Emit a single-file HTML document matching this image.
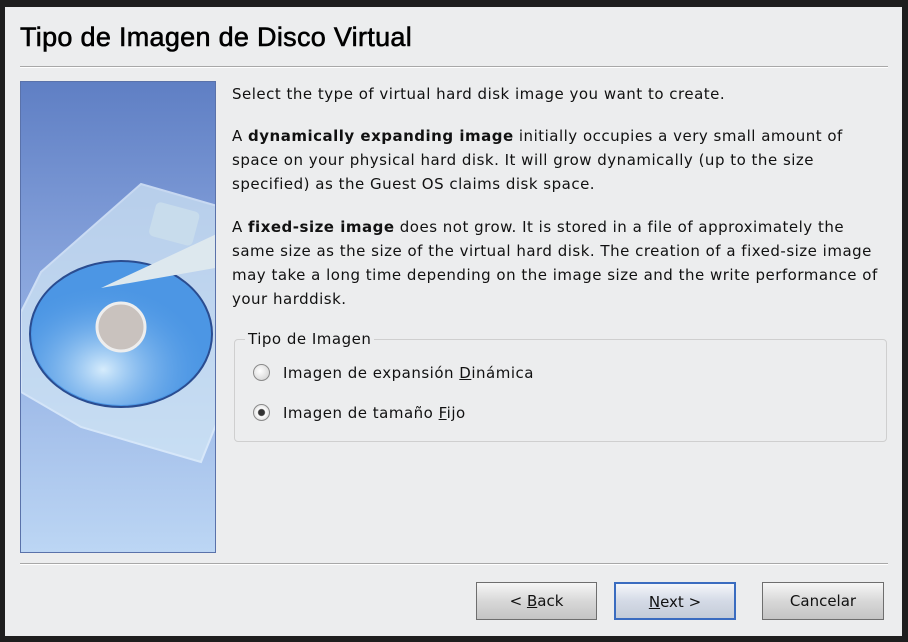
<!DOCTYPE html>
<html><head><style>
*{margin:0;padding:0;box-sizing:border-box}
body{width:908px;height:642px;background:#1e1e1e;position:relative;overflow:hidden;font-family:"DejaVu Sans","Liberation Sans",sans-serif;font-size:15px;letter-spacing:0.5px;color:#111}
.win{position:absolute;left:5px;top:7px;width:897px;height:629px;background:#ecedee}
.title{position:absolute;left:20px;top:22px;font-family:"Liberation Sans",sans-serif;font-size:27px;color:#000;letter-spacing:0.3px;-webkit-text-stroke:0.6px #000}
.hr{position:absolute;height:2px;background:#a8a8a8;border-bottom:1px solid #fff}
.img{position:absolute;left:20px;top:81px;width:196px;height:472px;border:1px solid #5a72aa;background:linear-gradient(#5f7fc4 0%,#7d9ad6 30%,#9ab6e6 60%,#bcd6f4 100%);overflow:hidden}
.txt{position:absolute;left:232px;line-height:24px;white-space:nowrap}
.gb{position:absolute;left:234px;top:339px;width:653px;height:103px;border:1px solid #cfcfcf;border-radius:4px}
.gbl{position:absolute;left:245px;top:329px;background:#ecedee;padding:0 3px;line-height:20px}
.radio{position:absolute;width:17px;height:17px;border-radius:50%;border:1px solid #8a8a8a;background:radial-gradient(circle at 40% 40%,#fff,#ccc)}
.btn{position:absolute;top:582px;height:38px;border:1px solid #6e6e6e;background:linear-gradient(#f6f6f6,#d8d8d8 50%,#c4c4c4);text-align:center;line-height:36px;font-size:15px;letter-spacing:0}
u{text-decoration:underline}
</style></head><body>
<div class="win"></div>
<div class="title">Tipo de Imagen de Disco Virtual</div>
<div class="hr" style="left:20px;top:66px;width:868px"></div>
<div class="img">
<svg width="196" height="472" viewBox="0 0 196 472">
<defs><radialGradient id="g" cx="40%" cy="75%" r="60%"><stop offset="0" stop-color="#d6ecfc"/><stop offset="1" stop-color="#4f9ae6" stop-opacity="0"/></radialGradient></defs>
<path d="M20 190 L120 102 L200 125 L200 330 L180 380 L60 345 L0 310 L0 230 Z" fill="#d4e8f6" opacity="0.7" stroke="#eaf6ff" stroke-width="2"/>
<rect x="130" y="125" width="45" height="35" rx="5" fill="#c8dcec" transform="rotate(15 155 145)"/>
<ellipse cx="100" cy="252" rx="91" ry="73" fill="#4c96e4" stroke="#2a4c90" stroke-width="2"/>
<ellipse cx="100" cy="252" rx="89" ry="71" fill="url(#g)"/>
<circle cx="100" cy="245" r="24" fill="#c9c2be" stroke="#eee" stroke-width="3"/>
<path d="M80 206 L200 150 L200 185 Z" fill="#dde8ee"/>
</svg>
</div>
<div class="txt" style="top:82px">Select the type of virtual hard disk image you want to create.</div>
<div class="txt" style="top:124px">A <b>dynamically expanding image</b> initially occupies a very small amount of<br>space on your physical hard disk. It will grow dynamically (up to the size<br>specified) as the Guest OS claims disk space.</div>
<div class="txt" style="top:215px">A <b>fixed-size image</b> does not grow. It is stored in a file of approximately the<br>same size as the size of the virtual hard disk. The creation of a fixed-size image<br>may take a long time depending on the image size and the write performance of<br>your harddisk.</div>
<div class="gb"></div>
<div class="gbl">Tipo de Imagen</div>
<div class="radio" style="left:253px;top:364px"></div>
<div class="txt" style="left:283px;top:361px">Imagen de expansión <u>D</u>inámica</div>
<div class="radio" style="left:253px;top:404px;background:radial-gradient(circle,#333 0 3px,#fff 4px,#ccc)"></div>
<div class="txt" style="left:283px;top:401px">Imagen de tamaño <u>F</u>ijo</div>
<div class="hr" style="left:20px;top:563px;width:868px"></div>
<div class="btn" style="left:476px;width:121px">&lt; <u>B</u>ack</div>
<div class="btn" style="left:614px;width:122px;border:2px solid #3a6cc0;background:linear-gradient(#f4f6fa,#d4dae6 50%,#c4ccd8)"><u>N</u>ext &gt;</div>
<div class="btn" style="left:762px;width:122px">Cancelar</div>
</body></html>
